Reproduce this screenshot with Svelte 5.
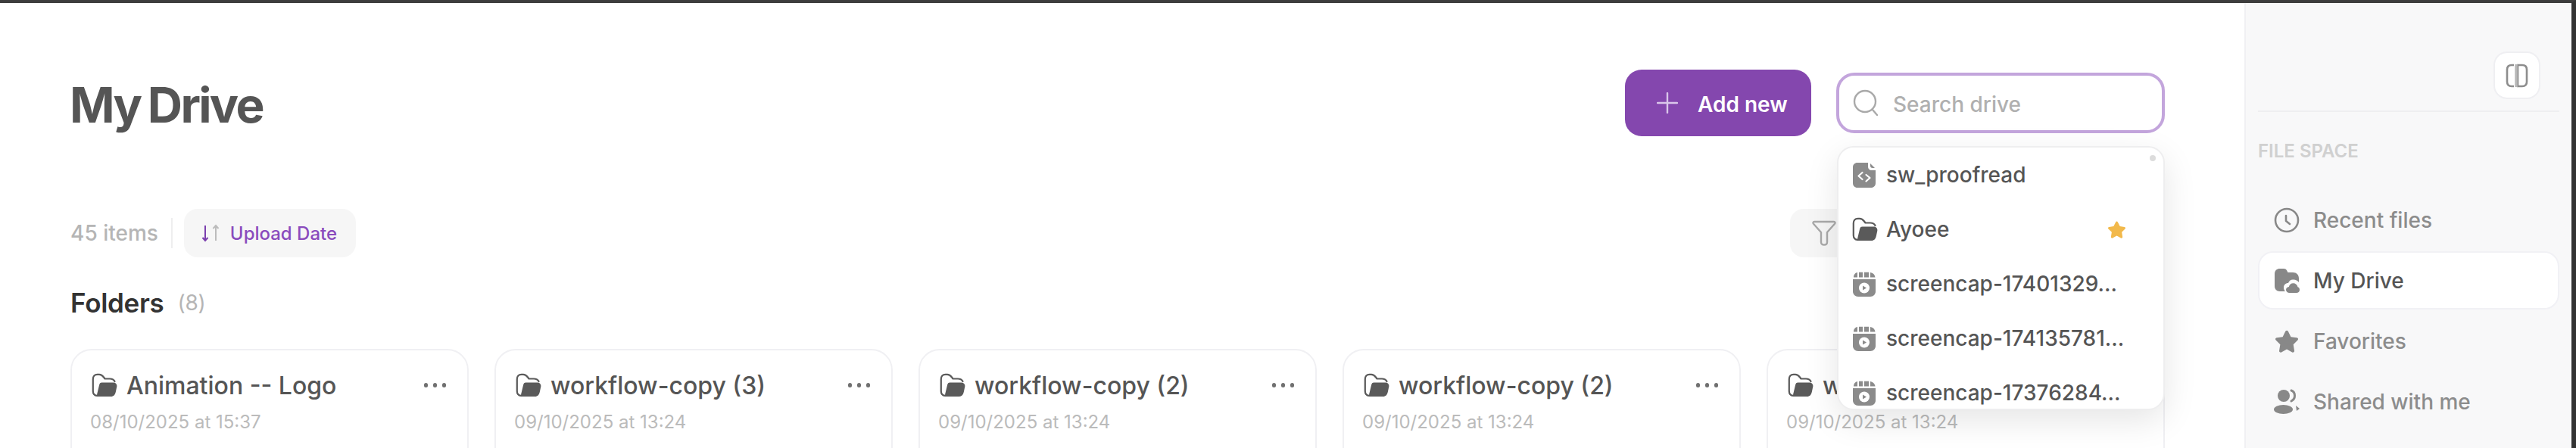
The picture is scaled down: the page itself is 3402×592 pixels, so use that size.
<script>
  const results = [
    { icon: 'code', name: 'sw_proofread' },
    { icon: 'folder', name: 'Ayoee', star: true },
    { icon: 'video', name: 'screencap-17401329...' },
    { icon: 'video', name: 'screencap-174135781...' },
    { icon: 'video', name: 'screencap-17376284...' }
  ];
  const folders = [
    { name: 'Animation -- Logo', date: '08/10/2025 at 15:37' },
    { name: 'workflow-copy (3)', date: '09/10/2025 at 13:24' },
    { name: 'workflow-copy (2)', date: '09/10/2025 at 13:24' },
    { name: 'workflow-copy (2)', date: '09/10/2025 at 13:24' },
    { name: 'workflow-copy (2)', date: '09/10/2025 at 13:24' }
  ];
  const nav = [
    { icon: 'clock', label: 'Recent files' },
    { icon: 'cloud', label: 'My Drive', active: true },
    { icon: 'star', label: 'Favorites' },
    { icon: 'users', label: 'Shared with me' }
  ];
  const starPath = 'M12 2.2c.5 0 .9.3 1.2.8l2.5 5 5.4.8c1.1.2 1.5 1.5.7 2.2l-3.9 3.9.9 5.5c.2 1.1-1 1.9-2 1.4L12 19.2l-4.8 2.6c-1 .5-2.2-.3-2-1.4l.9-5.5-3.9-3.9c-.8-.7-.4-2 .7-2.2l5.4-.8 2.5-5c.3-.5.7-.8 1.2-.8z';
</script>

{#snippet folderIcon()}
  <svg class="folder-icon" viewBox="0 0 34 32" aria-hidden="true">
    <path d="M10 29.800H7C3.500 29.800 1.800 27 1.800 24V8C1.800 4 4 1.800 7.500 1.800H10C13 1.800 14.500 3.500 16 5.500L17.500 7.500H24C27 7.500 29.500 9 30.500 11" fill="none" stroke="currentColor" stroke-width="2.200" stroke-linecap="round" stroke-linejoin="round"/>
    <path d="M13.500 12.500H28.500C32 12.500 33.800 15 33.300 18L31.800 25C31 28.800 29 31 25.500 31H9.500C7.500 31 6.500 29 7.500 26.500L10 16C10.500 13.500 11.500 12.500 13.500 12.500Z" fill="currentColor"/>
  </svg>
{/snippet}

{#snippet resultIcon(kind)}
  {#if kind === 'code'}
    <svg class="r-icon" viewBox="0 0 30 33" aria-hidden="true">
      <path d="M6 0h14v5c0 3 2 5 5 5h5v17c0 3.500-2.500 6-6 6H6c-3.500 0-6-2.500-6-6V6c0-3.500 2.500-6 6-6z" fill="#8b8b8b"/>
      <path d="M23 1l6 6h-3c-2 0-3-1-3-3z" fill="#8b8b8b"/>
      <path d="M12.500 13l-5 4.500 5 4.500M17.500 16l5 4-5 4.500" fill="none" stroke="#fff" stroke-width="2.200" stroke-linecap="round" stroke-linejoin="round"/>
    </svg>
  {:else if kind === 'folder'}
    <span class="r-folder">{@render folderIcon()}</span>
  {:else}
    <svg class="r-icon" viewBox="0 0 30 33" aria-hidden="true">
      <path d="M1 7.500C1 4 3 1.500 6 1v6.500zM8 .8h5v6.700H8zM15 .8h6v6.700h-6zM23 1c3.500.5 6 2.800 6.500 6.500H23z" fill="#8b8b8b"/>
      <path d="M0 10h30v16c0 4-3 7-7 7H7c-4 0-7-3-7-7z" fill="#8b8b8b"/>
      <circle cx="15" cy="21.500" r="7" fill="#fff"/>
      <path d="M13 18.500l5 3-5 3z" fill="#8b8b8b"/>
    </svg>
  {/if}
{/snippet}

{#snippet navIcon(kind)}
  <svg class="nav-icon" viewBox="0 0 34 34" aria-hidden="true">
    {#if kind === 'clock'}
      <circle cx="17" cy="17" r="15" fill="none" stroke="currentColor" stroke-width="2.600"/>
      <path d="M16 11v7l5 4" fill="none" stroke="currentColor" stroke-width="2.600" stroke-linecap="round" stroke-linejoin="round"/>
    {:else if kind === 'cloud'}
      <path d="M8 1h5c2 0 3 .7 4 2.200L18.500 6H25c5 0 8 3 8 8v5c-2-2.500-5-4-8-3.500-3 0-5 2-6 4.500-3.500 0-6 2.500-6 6 0 2 .7 3.800 2 5H8c-4.500 0-7-3-7-7V8c0-4.500 3-7 7-7z" fill="currentColor"/>
      <path d="M20.500 33c-2.500 0-4.500-1.700-4.500-4 0-2.200 1.600-3.800 3.800-4 .7-3 3-4.800 5.700-4.800 3 0 5.500 2 6 5 1.700.4 2.500 2 2.500 3.800 0 2.500-1.800 4-4.300 4z" fill="currentColor"/>
    {:else if kind === 'star'}
      <path transform="translate(-.6 -.6) scale(1.470)" d={starPath} fill="currentColor"/>
    {:else}
      <circle cx="13" cy="9" r="8" fill="currentColor"/>
      <ellipse cx="12.500" cy="27" rx="12.500" ry="6" fill="currentColor"/>
      <path d="M23 2c3 1 4.500 3.500 4.500 7s-1.500 5.500-4.500 7" fill="none" stroke="currentColor" stroke-width="3" stroke-linecap="round"/>
      <path d="M29 22l5 4-4 3z" fill="currentColor"/>
    {/if}
  </svg>
{/snippet}

<div class="page">
  <main class="main">
    <header class="header">
      <h1>My Drive</h1>
      <button class="add">
        <svg viewBox="0 0 28 28" aria-hidden="true"><path d="M14 1v26M1 14h26" stroke="#d9c6ea" stroke-width="2.400" stroke-linecap="round"/></svg>
        <span>Add new</span>
      </button>
      <div class="search-wrap">
        <div class="search">
          <svg viewBox="0 0 34 36" aria-hidden="true"><circle cx="16" cy="16" r="14" fill="none" stroke="#a9a9a9" stroke-width="2.400"/><path d="M26 27l6 7" stroke="#a9a9a9" stroke-width="2.400" stroke-linecap="round"/></svg>
          <span>Search drive</span>
        </div>
        <div class="dropdown">
          <i class="scroll-dot"></i>
          {#each results as r}
            <div class="result">
              {@render resultIcon(r.icon)}
              <span class="r-name">{r.name}</span>
              {#if r.star}
                <svg class="r-star" viewBox="0 0 24 24" aria-hidden="true"><path d={starPath} fill="#f2b94b"/></svg>
              {/if}
            </div>
          {/each}
        </div>
      </div>
    </header>

    <div class="toolbar">
      <span class="count">45 items</span>
      <i class="vline"></i>
      <button class="sort">
        <svg viewBox="0 0 28 24" aria-hidden="true">
          <path d="M7 2v20M3.500 18l3.500 4 3.500-4" fill="none" stroke="#7b3fae" stroke-width="2"/>
          <path d="M21 22V2M17.500 6L21 2l3.500 4" fill="none" stroke="#bcbcbc" stroke-width="2"/>
        </svg>
        <span>Upload Date</span>
      </button>
      <div class="filter">
        <svg viewBox="0 0 32 34" aria-hidden="true"><path d="M3 2h26c1.500 0 2 1.500 1 2.700L20 16v13c0 2-1.500 3.500-4 3.500S12 31 12 29V16L2 4.700C1 3.500 1.500 2 3 2z" fill="none" stroke="#a9a9a9" stroke-width="2.400" stroke-linejoin="round"/></svg>
      </div>
    </div>

    <h2 class="section"><span>Folders</span><em>(8)</em></h2>

    <div class="cards">
      {#each folders as f}
        <article class="card">
          <div class="card-top">
            {@render folderIcon()}
            <span class="card-name">{f.name}</span>
            <span class="dots"><i></i><i></i><i></i></span>
          </div>
          <div class="card-date">{f.date}</div>
        </article>
      {/each}
    </div>
  </main>

  <aside class="side">
    <div class="side-top">
      <button class="toggle" aria-label="Toggle sidebar">
        <svg viewBox="0 0 32 32" aria-hidden="true">
          <path d="M12 2H9C5 2 3 4 3 8v16c0 4 2 6 6 6h3" fill="none" stroke="#8d8d8d" stroke-width="2.600"/>
          <path d="M17 2h6c4 0 6 2 6 6v16c0 4-2 6-6 6h-6z" fill="none" stroke="#8d8d8d" stroke-width="2.600"/>
          <path d="M15 1v30" stroke="#b8b8b8" stroke-width="3.500"/>
        </svg>
      </button>
    </div>
    <div class="side-label">FILE SPACE</div>
    <nav class="nav">
      {#each nav as n}
        <div class="nav-item" class:active={n.active}>
          {@render navIcon(n.icon)}
          <span>{n.label}</span>
        </div>
      {/each}
    </nav>
  </aside>
</div>

<style>
  :global(body) {
    margin: 0;
    background: #fff;
  }
  .page {
    display: flex;
    width: 3402px;
    height: 592px;
    box-sizing: border-box;
    overflow: hidden;
    border-top: 4px solid #3d3d3d;
    border-right: 6px solid #333;
    font-family: Inter, "Liberation Sans", sans-serif;
    color: #555;
  }
  .main {
    flex: 1;
    min-width: 0;
    box-sizing: border-box;
    padding: 88px 105px 0 93px;
    background: #fff;
  }
  .header {
    display: flex;
    align-items: center;
    height: 88px;
  }
  h1 {
    margin: 6px auto 0 -1px;
    font-size: 64px;
    line-height: 1;
    font-weight: 700;
    letter-spacing: -2.700px;
    word-spacing: -3px;
    color: #555;
  }
  button {
    font-family: inherit;
    border: 0;
    padding: 0;
    cursor: pointer;
  }
  .add {
    display: flex;
    align-items: center;
    gap: 26px;
    box-sizing: border-box;
    width: 246px;
    height: 88px;
    padding-left: 42px;
    background: #8447ae;
    border-radius: 22px;
    color: #fff;
    font-size: 28px;
    font-weight: 600;
  }
  .add span {
    padding-top: 3px;
  }
  .add svg {
    width: 28px;
    height: 28px;
    flex: none;
  }
  .search-wrap {
    position: relative;
    width: 434px;
    margin-left: 33px;
  }
  .search {
    display: flex;
    align-items: center;
    gap: 19px;
    box-sizing: border-box;
    height: 80px;
    padding-left: 18px;
    border: 4px solid #c3a5dc;
    border-radius: 24px;
    background: #fff;
    color: #b0b0b0;
    font-size: 28px;
    font-weight: 500;
  }
  .search span {
    padding-top: 3px;
  }
  .search svg {
    width: 34px;
    height: 36px;
    flex: none;
  }
  .dropdown {
    position: absolute;
    z-index: 5;
    top: 97px;
    left: 1px;
    right: 0;
    height: 349px;
    box-sizing: border-box;
    overflow: hidden;
    background: #fff;
    border: 2px solid #eeeeef;
    border-radius: 22px;
    box-shadow: 0 14px 44px rgba(0, 0, 0, 0.1);
  }
  .scroll-dot {
    position: absolute;
    top: 10px;
    right: 10px;
    width: 8px;
    height: 8px;
    border-radius: 50%;
    background: #dcdcdc;
  }
  .result {
    display: flex;
    align-items: center;
    height: 72px;
    padding-left: 19px;
    font-size: 28px;
    font-weight: 500;
    color: #555;
    white-space: nowrap;
  }
  .r-icon {
    width: 30px;
    height: 33px;
    flex: none;
    margin-right: 14px;
  }
  .r-folder {
    display: flex;
    margin-right: 11px;
    margin-left: -1px;
    color: #666;
  }
  .r-folder :global(.folder-icon) {
    margin-right: 0;
  }
  .r-star {
    width: 27px;
    height: 27px;
    margin-left: auto;
    margin-right: 48px;
  }
  .toolbar {
    display: flex;
    align-items: center;
    height: 64px;
    margin-top: 96px;
  }
  .count {
    font-size: 28px;
    font-weight: 500;
    color: #b5b5b5;
  }
  .vline {
    width: 2px;
    height: 40px;
    margin: 0 15px 0 17px;
    background: #eeeeef;
  }
  .sort {
    display: flex;
    align-items: center;
    gap: 12px;
    box-sizing: border-box;
    width: 227px;
    height: 64px;
    padding-left: 21px;
    background: #f6f6f6;
    border-radius: 18px;
    color: #8a4bbd;
    font-size: 24px;
    font-weight: 500;
  }
  .sort svg {
    width: 28px;
    height: 24px;
    flex: none;
  }
  .filter {
    display: flex;
    align-items: center;
    box-sizing: border-box;
    width: 495px;
    height: 64px;
    margin-left: auto;
    padding-left: 29px;
    background: #f6f6f6;
    border-radius: 18px;
  }
  .filter svg {
    width: 32px;
    height: 34px;
  }
  .section {
    display: flex;
    align-items: center;
    gap: 18px;
    height: 48px;
    margin: 36px 0 0;
    font-size: 35px;
    font-weight: 600;
    letter-spacing: -0.300px;
    color: #333;
  }
  .section em {
    font-style: normal;
    font-size: 28px;
    font-weight: 400;
    color: #b5b5b5;
  }
  .cards {
    display: grid;
    grid-template-columns: repeat(5, 526px);
    gap: 34px;
    margin-top: 37px;
  }
  .card {
    box-sizing: border-box;
    height: 200px;
    padding: 29px 26px 0 26px;
    border: 2.500px solid #f0f0f3;
    border-radius: 28px;
    background: #fff;
  }
  .card-top {
    display: flex;
    align-items: center;
    height: 34px;
  }
  .folder-icon {
    width: 34px;
    height: 32px;
    flex: none;
    margin-right: 12px;
    color: #5a5a5a;
  }
  .card-name {
    flex: 1;
    font-size: 32px;
    font-weight: 500;
    color: #555;
    white-space: nowrap;
  }
  .dots {
    display: flex;
    gap: 6.500px;
    margin-right: 2px;
  }
  .dots i {
    width: 5.500px;
    height: 5.500px;
    border-radius: 50%;
    background: #707070;
  }
  .card-date {
    margin-top: 17px;
    margin-left: -2px;
    font-size: 24px;
    line-height: 30px;
    color: #bbb;
    white-space: nowrap;
  }
  .side {
    width: 432px;
    flex: none;
    box-sizing: border-box;
    padding: 0 16px 0 16px;
    background: #f8f8f9;
    border-left: 2px solid #f0f0f3;
  }
  .side-top {
    display: flex;
    justify-content: flex-end;
    height: 144px;
    padding: 64px 25px 0 0;
    box-sizing: border-box;
    border-bottom: 2px solid #efeff1;
  }
  .toggle {
    display: flex;
    align-items: center;
    justify-content: center;
    width: 62px;
    height: 63px;
    background: #fff;
    border: 2px solid #efeff2;
    border-radius: 18px;
  }
  .toggle svg {
    width: 32px;
    height: 32px;
  }
  .side-label {
    margin-top: 39px;
    font-size: 24px;
    line-height: 26px;
    font-weight: 600;
    color: #d0d0d0;
  }
  .nav {
    display: flex;
    flex-direction: column;
    gap: 3px;
    margin-top: 39px;
  }
  .nav-item {
    display: flex;
    align-items: center;
    gap: 18px;
    height: 77px;
    box-sizing: border-box;
    padding-left: 19px;
    border: 2px solid transparent;
    border-radius: 20px;
    font-size: 28px;
    font-weight: 500;
    color: #8c8c8c;
  }
  .nav-item.active {
    background: #fff;
    border-color: #f1f1f5;
    color: #555;
  }
  .nav-icon {
    width: 34px;
    height: 34px;
    flex: none;
    color: #888;
  }
</style>
